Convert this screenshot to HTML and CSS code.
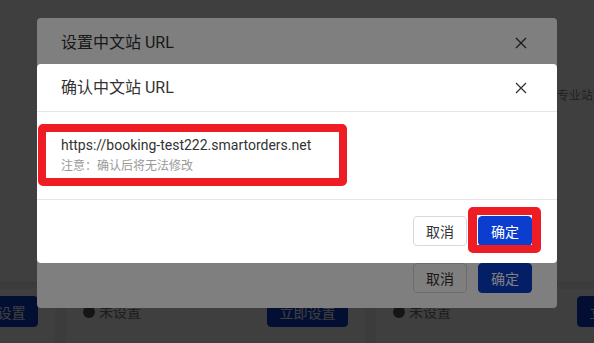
FILE: index.html
```html
<!DOCTYPE html>
<html lang="zh-CN">
<head>
    <meta charset="UTF-8">
    <meta name="viewport" content="width=device-width, initial-scale=1.0">
    <title>设置中文站 URL</title>
    <link rel="stylesheet" href="styles.css">
</head>
<body>
    <div class="page">
        <div class="panel">
            <p class="tip">开通专业站点服务</p>
        </div>
        <div class="site-row">
            <div class="site-card">
                <span class="status"><i class="dot"></i>未设置</span>
                <button class="btn btn-primary btn-set">立即设置</button>
            </div>
            <div class="site-card">
                <span class="status"><i class="dot"></i>未设置</span>
                <button class="btn btn-primary btn-set">立即设置</button>
            </div>
            <div class="site-card">
                <span class="status"><i class="dot"></i>未设置</span>
                <button class="btn btn-primary btn-set">立即设置</button>
            </div>
        </div>
    </div>

    <div class="mask"></div>

    <!-- 第一层弹窗 -->
    <div class="dialog dialog-back">
        <div class="dialog-header">
            <span class="dialog-title">设置中文站 URL</span>
            <svg class="close" width="12" height="12" viewBox="0 0 12 12"><path d="M1 1L11 11M11 1L1 11" stroke="#333" stroke-width="1.3" fill="none"/></svg>
        </div>
        <div class="dialog-footer">
            <button class="btn">取消</button>
            <button class="btn btn-primary">确定</button>
        </div>
    </div>

    <div class="mask"></div>

    <!-- 确认弹窗 -->
    <div class="dialog dialog-front">
        <div class="dialog-header">
            <span class="dialog-title">确认中文站 URL</span>
            <svg class="close" width="12" height="12" viewBox="0 0 12 12"><path d="M1 1L11 11M11 1L1 11" stroke="#333" stroke-width="1.3" fill="none"/></svg>
        </div>
        <div class="dialog-body">
            <div class="url">https://booking-test222.smartorders.net</div>
            <div class="note">注意：确认后将无法修改</div>
        </div>
        <div class="dialog-footer">
            <button class="btn">取消</button>
            <button class="btn btn-primary">确定</button>
        </div>
    </div>

    <!-- 截图标注 -->
    <div class="mark mark-url"></div>
    <div class="mark mark-ok"></div>
</body>
</html>
```

FILE: styles.css
```css
body {
    margin: 0;
    width: 594px;
    height: 343px;
    overflow: hidden;
    position: relative;
    font-family: Roboto, "Noto Sans CJK SC", sans-serif;
    color: #333;
}
.page {
    background-color: #f0f0f0;
    height: 343px;
}
.panel {
    height: 283px;
    background-color: white;
    border-bottom: 1px solid #e4e4e4;
    padding-top: 86px;
    box-sizing: border-box;
}
.tip {
    margin: 0 0 0 533px;
    font-size: 12px;
    line-height: 20px;
    color: #888;
    white-space: nowrap;
}
.site-row {
    display: flex;
    gap: 11px;
    margin-left: -244px;
    padding-top: 6px;
}
.site-card {
    flex: 0 0 299px;
    height: 60px;
    background-color: white;
    display: flex;
    justify-content: space-between;
    align-items: flex-start;
    padding: 7px 17px;
    box-sizing: border-box;
}
.status {
    display: flex;
    align-items: center;
    gap: 4px;
    font-size: 14px;
    line-height: 18px;
    color: #777;
    margin-top: 7px;
}
.dot {
    width: 12px;
    height: 12px;
    border-radius: 50%;
    background-color: #555;
}
.btn {
    height: 30px;
    padding: 0 12px;
    font-family: inherit;
    font-size: 14px;
    color: #333;
    background-color: white;
    border: 1px solid #d9d9d9;
    border-radius: 4px;
}
.btn-primary {
    background-color: #0b3ecf;
    border-color: #0b3ecf;
    color: white;
}
.btn-set {
    width: 81px;
    height: 31px;
    padding: 0;
}
.mask {
    position: absolute;
    inset: 0;
    background-color: rgba(0,0,0,0.5);
}
.dialog {
    position: absolute;
    left: 37px;
    width: 520px;
    background-color: white;
    border-radius: 4px;
    display: flex;
    flex-direction: column;
}
.dialog-back {
    top: 18px;
    height: 290px;
}
.dialog-front {
    top: 64px;
}
.dialog-header {
    display: flex;
    justify-content: space-between;
    align-items: center;
    padding: 12px 30px 12px 24px;
    border-bottom: 1px solid #e6e6e6;
}
.dialog-back .dialog-header {
    padding-top: 13px;
}
.dialog-title {
    font-size: 16px;
    line-height: 23px;
    color: #333;
}
.dialog-body {
    padding: 24px 24px 24px;
    border-bottom: 1px solid #e6e6e6;
}
.url {
    font-size: 14px;
    line-height: 18px;
    color: #333;
}
.note {
    margin-top: 3px;
    font-size: 12px;
    line-height: 18px;
    color: #999;
}
.dialog-footer {
    display: flex;
    justify-content: flex-end;
    gap: 11px;
    padding: 16px 25px 17px;
}
.dialog-back .dialog-footer {
    margin-top: auto;
    padding-bottom: 15px;
}
.mark {
    position: absolute;
    border: 8px solid #ee1c25;
    border-radius: 5px;
    box-sizing: border-box;
}
.mark-url {
    left: 38px;
    top: 124px;
    width: 309px;
    height: 62px;
}
.mark-ok {
    left: 468px;
    top: 207px;
    width: 73px;
    height: 46px;
    border-left-width: 9px;
    border-right-width: 9px;
}
```
